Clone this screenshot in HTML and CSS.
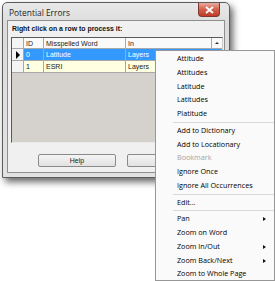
FILE: index.html
```html
<!DOCTYPE html>
<html lang="en">
<head>
<meta charset="UTF-8">
<title>Potential Errors</title>
<link rel="stylesheet" href="styles.css">
</head>
<body>
  <div id="stage">
    <div class="window">
      <div class="titlebar">
        <span class="title">Potential Errors</span>
        <span class="close">
          <svg width="9" height="8" viewBox="0 0 9 8"><path d="M1 1 L8 7 M8 1 L1 7" stroke="#ffffff" stroke-width="1.8" /></svg>
        </span>
      </div>
      <div class="client">
        <div class="prompt">Right click on a row to process it:</div>
        <div class="grid">
          <div class="grid-row grid-head">
            <div class="cell rowhead"></div>
            <div class="cell col-id">ID</div>
            <div class="cell col-word">Misspelled Word</div>
            <div class="cell col-in">In</div>
            <div class="cell col-scroll"><span class="up-arrow"></span></div>
          </div>
          <div class="grid-row selected">
            <div class="cell rowhead"><span class="row-arrow"></span></div>
            <div class="cell col-id">0</div>
            <div class="cell col-word">Latitude</div>
            <div class="cell col-in">Layers</div>
          </div>
          <div class="grid-row">
            <div class="cell rowhead"></div>
            <div class="cell col-id">1</div>
            <div class="cell col-word">ESRI</div>
            <div class="cell col-in">Layers</div>
          </div>
        </div>
        <div class="buttons">
          <div class="btn">Help</div>
          <div class="btn">Close</div>
        </div>
      </div>
    </div>

    <div class="menu">
      <div class="item">Attitude</div>
      <div class="item">Attitudes</div>
      <div class="item">Latitude</div>
      <div class="item">Latitudes</div>
      <div class="item">Platitude</div>
      <div class="sep"></div>
      <div class="item">Add to Dictionary</div>
      <div class="item">Add to Locationary</div>
      <div class="item disabled">Bookmark</div>
      <div class="item">Ignore Once</div>
      <div class="item">Ignore All Occurrences</div>
      <div class="sep"></div>
      <div class="item">Edit...</div>
      <div class="sep"></div>
      <div class="item sub">Pan</div>
      <div class="item">Zoom on Word</div>
      <div class="item sub">Zoom In/Out</div>
      <div class="item sub">Zoom Back/Next</div>
      <div class="item">Zoom to Whole Page</div>
    </div>
  </div>
</body>
</html>
```

FILE: styles.css
```css
body {
  margin: 0;
  padding: 0;
  background-color: #ffffff;
  font-family: "Liberation Sans", Arial, sans-serif;
  color: #1a1a1a;
  overflow: hidden;
}
#stage {
  position: relative;
  width: 275px;
  height: 281px;
  padding: 2px 0 0 2px;
  box-sizing: border-box;
}

/* dialog window */
.window {
  width: 228px;
  height: 176px;
  box-sizing: border-box;
  border: 1px solid #5c5c5c;
  border-radius: 5px 5px 0 0;
  background: linear-gradient(#e9e9e9, #dcdcdc 20px, #e2e2e2);
  box-shadow: 3px 4px 7px rgba(0, 0, 0, 0.6);
  padding: 0 4px 4px 4px;
  display: flex;
  flex-direction: column;
}
.titlebar {
  height: 17px;
  display: flex;
  align-items: flex-start;
  justify-content: space-between;
}
.title {
  font-family: "Open Sans", sans-serif;
  font-size: 8.4px;
  color: #222222;
  margin: 4px 0 0 2px;
}
.close {
  width: 22px;
  height: 14px;
  margin-right: 5px;
  border: 1px solid #7e3a30;
  border-top: none;
  border-radius: 0 0 4px 4px;
  background: linear-gradient(#e8ab9e, #d2604c 50%, #c23a25);
  display: flex;
  align-items: center;
  justify-content: center;
  box-sizing: border-box;
}
.client {
  flex: 1;
  border: 1px solid #8f8f8f;
  background-color: #f0f0f0;
  padding: 0 1px 0 3px;
  display: flex;
  flex-direction: column;
}
.prompt {
  font-weight: bold;
  font-size: 6.9px;
  height: 16px;
  line-height: 16px;
  padding-left: 1px;
  color: #111111;
}

/* data grid */
.grid {
  height: 106px;
  box-sizing: border-box;
  border: 1px solid #5a5a5a;
  border-right-color: #c8c8c8;
  border-bottom-color: #e8e8e8;
  background-color: #d5d1cc;
  font-size: 7px;
}
.grid-row {
  display: flex;
  height: 12px;
  line-height: 12px;
  background-color: #ffffe1;
}
.grid-head {
  height: 11px;
  line-height: 11px;
  background-color: #fafafa;
}
.cell {
  box-sizing: border-box;
  border-right: 1px solid #a8a8a8;
  border-bottom: 1px solid #a8a8a8;
  padding-left: 2px;
  white-space: nowrap;
  overflow: hidden;
}
.rowhead {
  width: 12px;
  background-color: #f4f4f4;
  display: flex;
  align-items: center;
  justify-content: center;
  padding: 0;
}
.col-id { width: 20px; }
.col-word { width: 82px; }
.col-in { flex: 1; }
.col-scroll {
  width: 10px;
  padding: 0;
  border-right: none;
  display: flex;
  align-items: center;
  justify-content: center;
}
.up-arrow {
  width: 0;
  height: 0;
  border-left: 2px solid transparent;
  border-right: 2px solid transparent;
  border-bottom: 2px solid #333333;
}
.row-arrow {
  width: 0;
  height: 0;
  border-top: 4px solid transparent;
  border-bottom: 4px solid transparent;
  border-left: 4px solid #000000;
}
.selected .cell {
  background-color: #3399ff;
  color: #ffffff;
}
.selected .rowhead {
  background-color: #f4f4f4;
}

.buttons {
  display: flex;
  gap: 11px;
  padding: 11px 0 0 27px;
}
.btn {
  width: 78px;
  height: 13px;
  box-sizing: border-box;
  border: 1px solid #8a8a8a;
  border-radius: 2px;
  background: linear-gradient(#f4f4f4, #e2e2e2);
  font-size: 7px;
  line-height: 11px;
  text-align: center;
  color: #222222;
}

/* context menu, drawn over the dialog */
.menu {
  position: absolute;
  left: 155px;
  top: 50px;
  width: 120px;
  height: 231px;
  box-sizing: border-box;
  border: 1px solid #979797;
  background-color: #fafafa;
  padding-top: 1px;
  font-family: "Open Sans", sans-serif;
  font-size: 7.2px;
}
.item {
  position: relative;
  height: 13.75px;
  line-height: 13.75px;
  padding-left: 21px;
  color: #000000;
}
.item.disabled {
  color: #a3a3a3;
}
.item.sub::after {
  content: "";
  position: absolute;
  right: 8px;
  top: 5px;
  border-top: 2px solid transparent;
  border-bottom: 2px solid transparent;
  border-left: 3px solid #111111;
}
.sep {
  height: 3px;
  margin-left: 17px;
  position: relative;
}
.sep::before {
  content: "";
  position: absolute;
  left: 0;
  right: 0;
  top: 1px;
  border-top: 1px solid #d9d9d9;
}
```
